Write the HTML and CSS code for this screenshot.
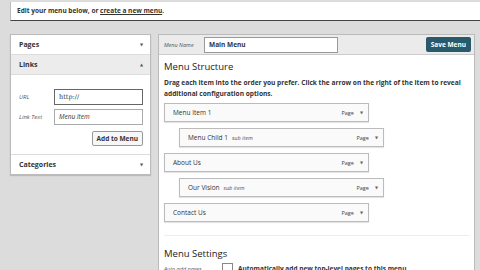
FILE: index.html
```html
<!DOCTYPE html>
<html lang="en">
<head>
    <meta charset="UTF-8">
    <title>Menus</title>
    <link rel="stylesheet" href="styles.css">
</head>
<body>

    <div class="notice">
        Edit your menu below, or <a href="#">create a new menu</a>.
    </div>

    <div class="columns">
        <div class="side">
            <div class="box-head">Pages <span class="arrow">▼</span></div>
            <div class="box-head open">Links <span class="arrow">▲</span></div>
            <div class="box-body">
                <div class="field">
                    <label>URL</label>
                    <div class="input url">http://</div>
                </div>
                <div class="field">
                    <label>Link Text</label>
                    <div class="input italic">Menu Item</div>
                </div>
                <div class="btn-row">
                    <button class="button">Add to Menu</button>
                </div>
            </div>
            <div class="box-head last">Categories <span class="arrow">▼</span></div>
        </div>

        <div class="main">
            <div class="main-head">
                <label>Menu Name</label>
                <div class="input name">Main Menu</div>
                <button class="save">Save Menu</button>
            </div>
            <div class="main-body">
                <h3>Menu Structure</h3>
                <p class="desc">Drag each item into the order you prefer. Click the arrow on the right of the item to reveal additional configuration options.</p>

                <div class="items">
                    <div class="item">Menu Item 1 <span class="type">Page</span><span class="toggle">▼</span></div>
                    <div class="item child">Menu Child 1 <em>sub item</em> <span class="type">Page</span><span class="toggle">▼</span></div>
                    <div class="item">About Us <span class="type">Page</span><span class="toggle">▼</span></div>
                    <div class="item child">Our Vision <em>sub item</em> <span class="type">Page</span><span class="toggle">▼</span></div>
                    <div class="item">Contact Us <span class="type">Page</span><span class="toggle">▼</span></div>
                </div>

                <h3 class="settings">Menu Settings</h3>
                <div class="setting">
                    <span class="set-label">Auto add pages</span>
                    <span class="check"></span>
                    <span>Automatically add new top-level pages to this menu</span>
                </div>
            </div>
        </div>
    </div>

</body>
</html>
```
FILE: styles.css
```css
body {
    margin: 0;
    background: #dcdcdc;
    font-family: "Open Sans", "DejaVu Sans", sans-serif;
    font-size: 7px;
    color: #333;
    overflow: hidden;
}

.notice {
    margin: 2px 0 0 10px;
    height: 18px;
    line-height: 18px;
    padding-left: 6px;
    background: #fff;
    border-left: 1px solid #bbb;
    border-bottom: 1px solid #444;
    font-weight: bold;
    font-size: 6.5px;
}

.notice a {
    color: #333;
}

.columns {
    display: flex;
    gap: 7px;
    margin: 13px 0 0 10px;
    align-items: flex-start;
}

.side {
    width: 139px;
    background: #fff;
    border: 1px solid #bbb;
    box-shadow: 0 1px 1px rgba(0, 0, 0, 0.15);
}

.box-head {
    display: flex;
    justify-content: space-between;
    align-items: center;
    height: 19px;
    padding: 0 7px 0 8px;
    font-weight: bold;
    border-bottom: 1px solid #ddd;
}

.box-head.open {
    background: #ececec;
}

.box-head.last {
    border-bottom: none;
    border-top: 1px solid #ddd;
}

.arrow {
    font-size: 4px;
    color: #555;
}

.box-body {
    padding: 14px 7px 8px 8px;
}

.field {
    display: flex;
    align-items: center;
    margin-bottom: 4px;
}

.field label {
    width: 35px;
    font-size: 6px;
    font-style: italic;
    color: #555;
}

.input {
    flex: 1;
    height: 14px;
    line-height: 14px;
    border: 1px solid #aaa;
    background: #fff;
    padding: 0 4px;
    font-size: 6.5px;
}

.input.url {
    border-color: #666;
    font-family: "DejaVu Serif", serif;
}

.italic {
    font-style: italic;
}

.btn-row {
    display: flex;
    justify-content: flex-end;
    margin-top: 6px;
}

.button {
    height: 15px;
    padding: 0 4px;
    border: 1px solid #999;
    border-radius: 2px;
    background: #f7f7f7;
    font-family: inherit;
    font-size: 6.5px;
    font-weight: bold;
    color: #333;
}

.main {
    width: 315px;
    height: 240px;
    background: #fff;
    border: 1px solid #bbb;
}

.main-head {
    display: flex;
    align-items: center;
    height: 19px;
    padding: 0 3px 0 5px;
    background: #ebebeb;
    border-bottom: 1px solid #ccc;
}

.main-head label {
    width: 40px;
    font-size: 5.5px;
    font-style: italic;
    color: #555;
}

.input.name {
    flex: none;
    width: 124px;
    font-weight: bold;
    border-color: #999;
}

.save {
    margin-left: auto;
    height: 15px;
    padding: 0 5px;
    border: none;
    border-radius: 2px;
    background: #285a6b;
    color: #fff;
    font-family: inherit;
    font-size: 6.5px;
    font-weight: bold;
}

.main-body {
    padding: 0 5px;
}

h3 {
    margin: 5px 0 0;
    font-size: 9.5px;
    font-weight: normal;
    color: #222;
}

.desc {
    margin: 4px 0 0;
    font-size: 6.6px;
    font-weight: bold;
    line-height: 11px;
}

.items {
    margin-top: 4px;
    padding-bottom: 7px;
    border-bottom: 1px solid #eee;
}

.item {
    display: flex;
    align-items: center;
    width: 190px;
    height: 17px;
    padding: 0 5px 0 8px;
    margin-bottom: 6px;
    border: 1px solid #bbb;
    background: #fafafa;
    box-shadow: 0 1px 1px rgba(0, 0, 0, 0.1);
    font-size: 6.5px;
    color: #333;
}

.item.child {
    margin-left: 15px;
}

.item em {
    font-size: 5.5px;
    margin-left: 4px;
    color: #555;
}

.type {
    margin-left: auto;
    font-size: 5.5px;
    color: #444;
}

.toggle {
    margin-left: 6px;
    font-size: 4px;
    color: #666;
}

.settings {
    margin-top: 11px;
}

.setting {
    display: flex;
    align-items: center;
    margin-top: 3px;
    font-size: 6.5px;
    font-weight: bold;
}

.set-label {
    width: 58px;
    font-size: 5.5px;
    font-style: italic;
    font-weight: normal;
    color: #555;
}

.check {
    width: 9px;
    height: 9px;
    border: 1px solid #888;
    background: #fff;
    margin-right: 5px;
}
```
